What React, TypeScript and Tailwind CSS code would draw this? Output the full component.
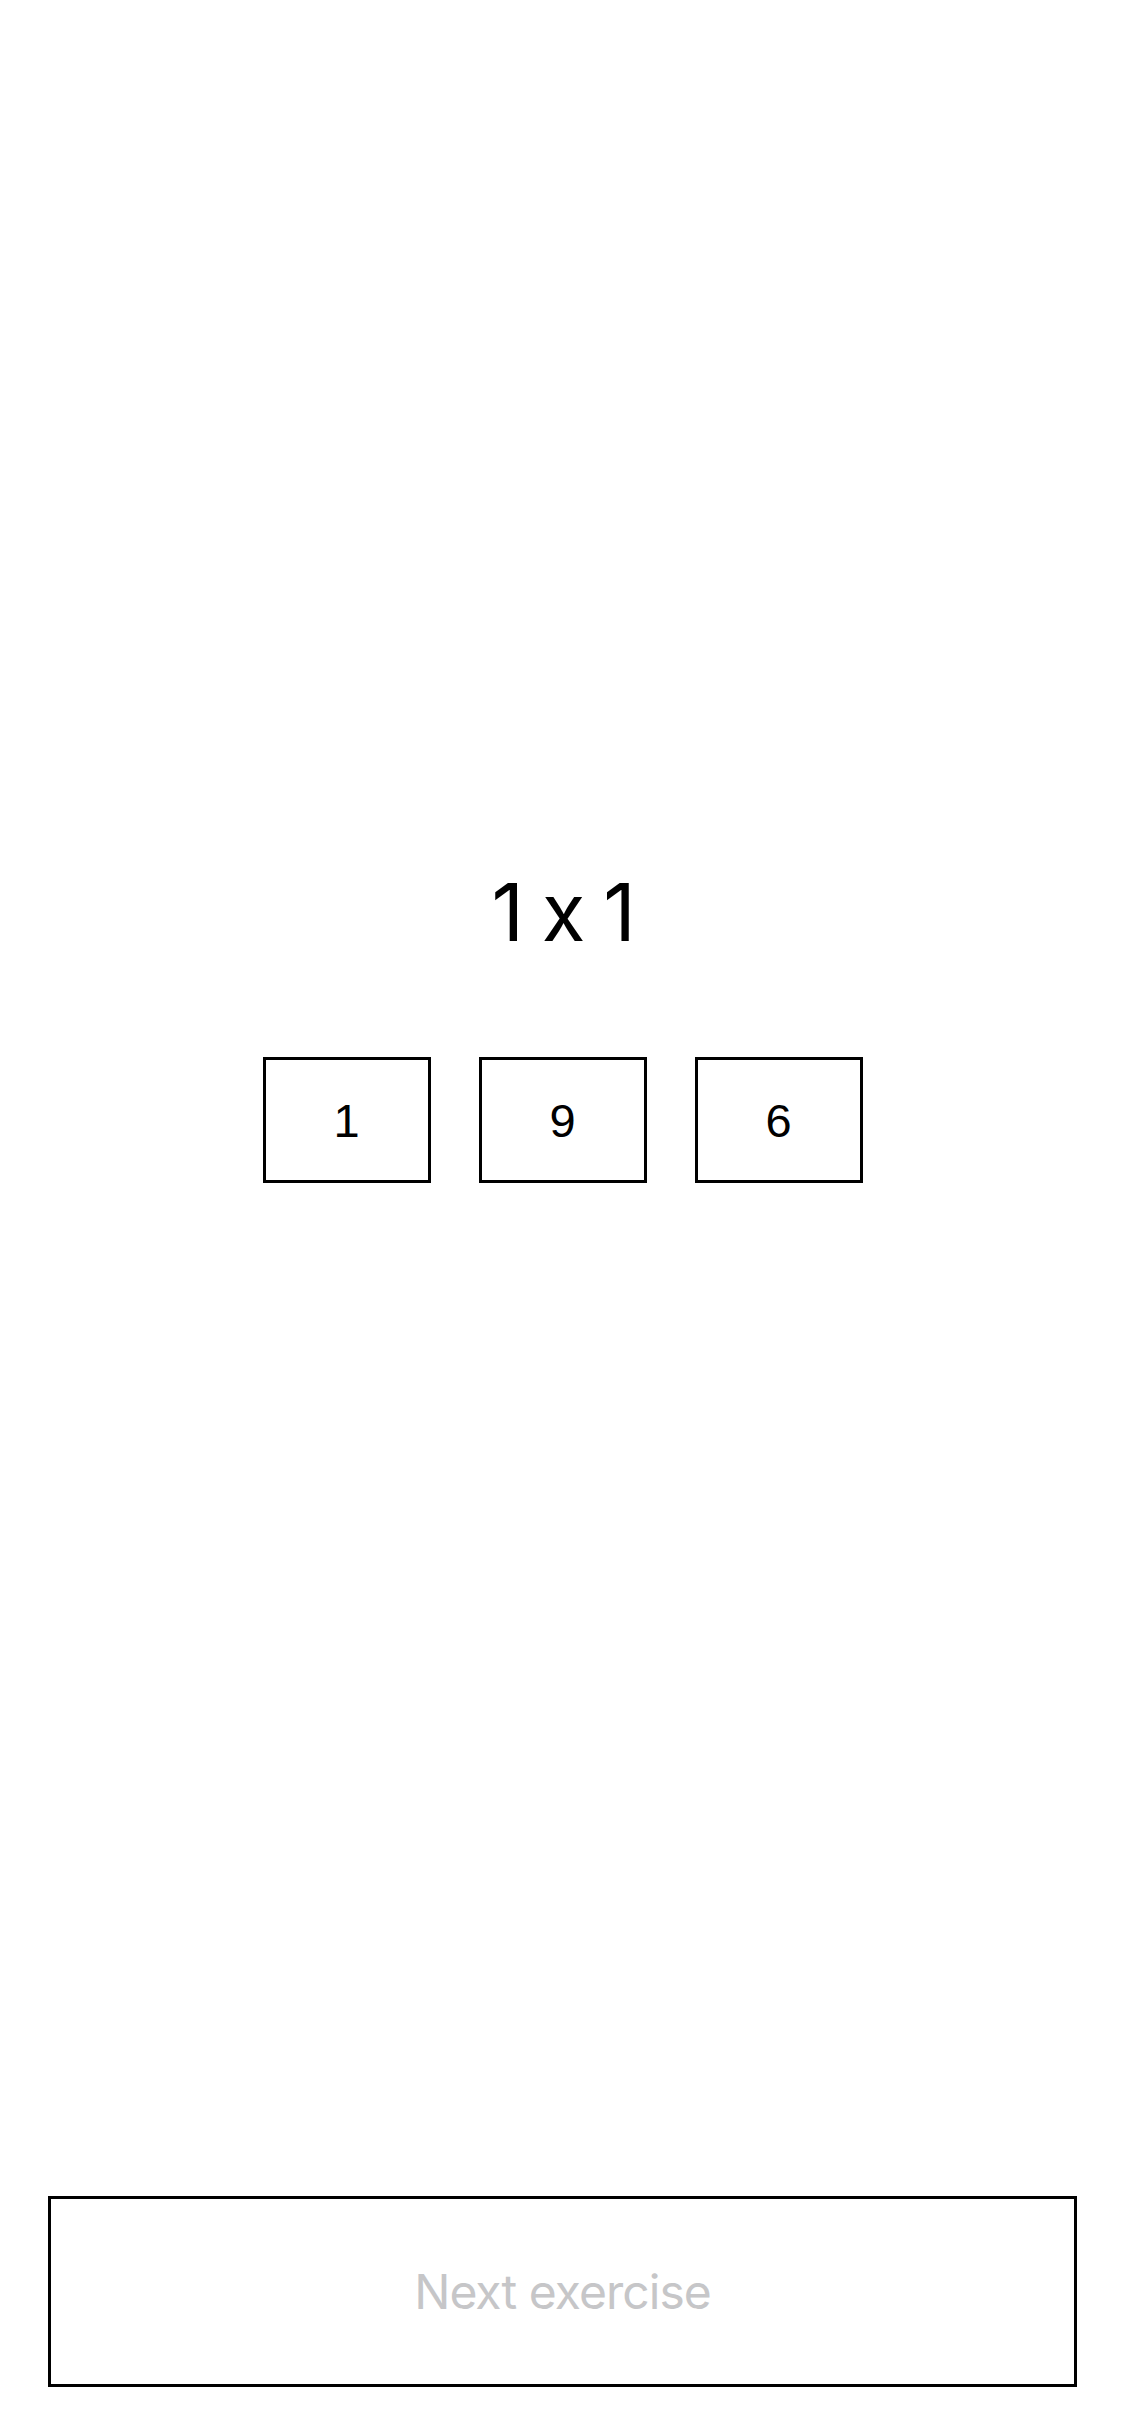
export default function App() {
    const answers = [1, 9, 6];

    return (
        <div className="flex h-[2436px] w-full flex-col bg-white">
            {/* Exercise */}
            <div className="pt-[872px] text-center font-['Inter',sans-serif] text-[80px] leading-none tracking-[-0.03em] text-black [font-feature-settings:'calt'_0]">
                1 x 1
            </div>

            {/* Answers */}
            <div className="mt-[105px] flex justify-center gap-12">
                {answers.map((n) => (
                    <button
                        key={n}
                        className="flex h-[126px] w-[168px] items-center justify-center border-[3px] border-black bg-white font-['Liberation_Sans',sans-serif] text-[47px] leading-none text-black"
                    >
                        {n}
                    </button>
                ))}
            </div>

            <div className="flex-1" />

            {/* Next */}
            <div className="px-12 pb-[49px]">
                <button className="flex h-[191px] w-full items-center justify-center border-[3px] border-black bg-white font-['Inter',sans-serif] text-[48px] leading-none tracking-[-0.02em] text-[#c6c6c8]">
                    Next exercise
                </button>
            </div>
        </div>
    );
}
